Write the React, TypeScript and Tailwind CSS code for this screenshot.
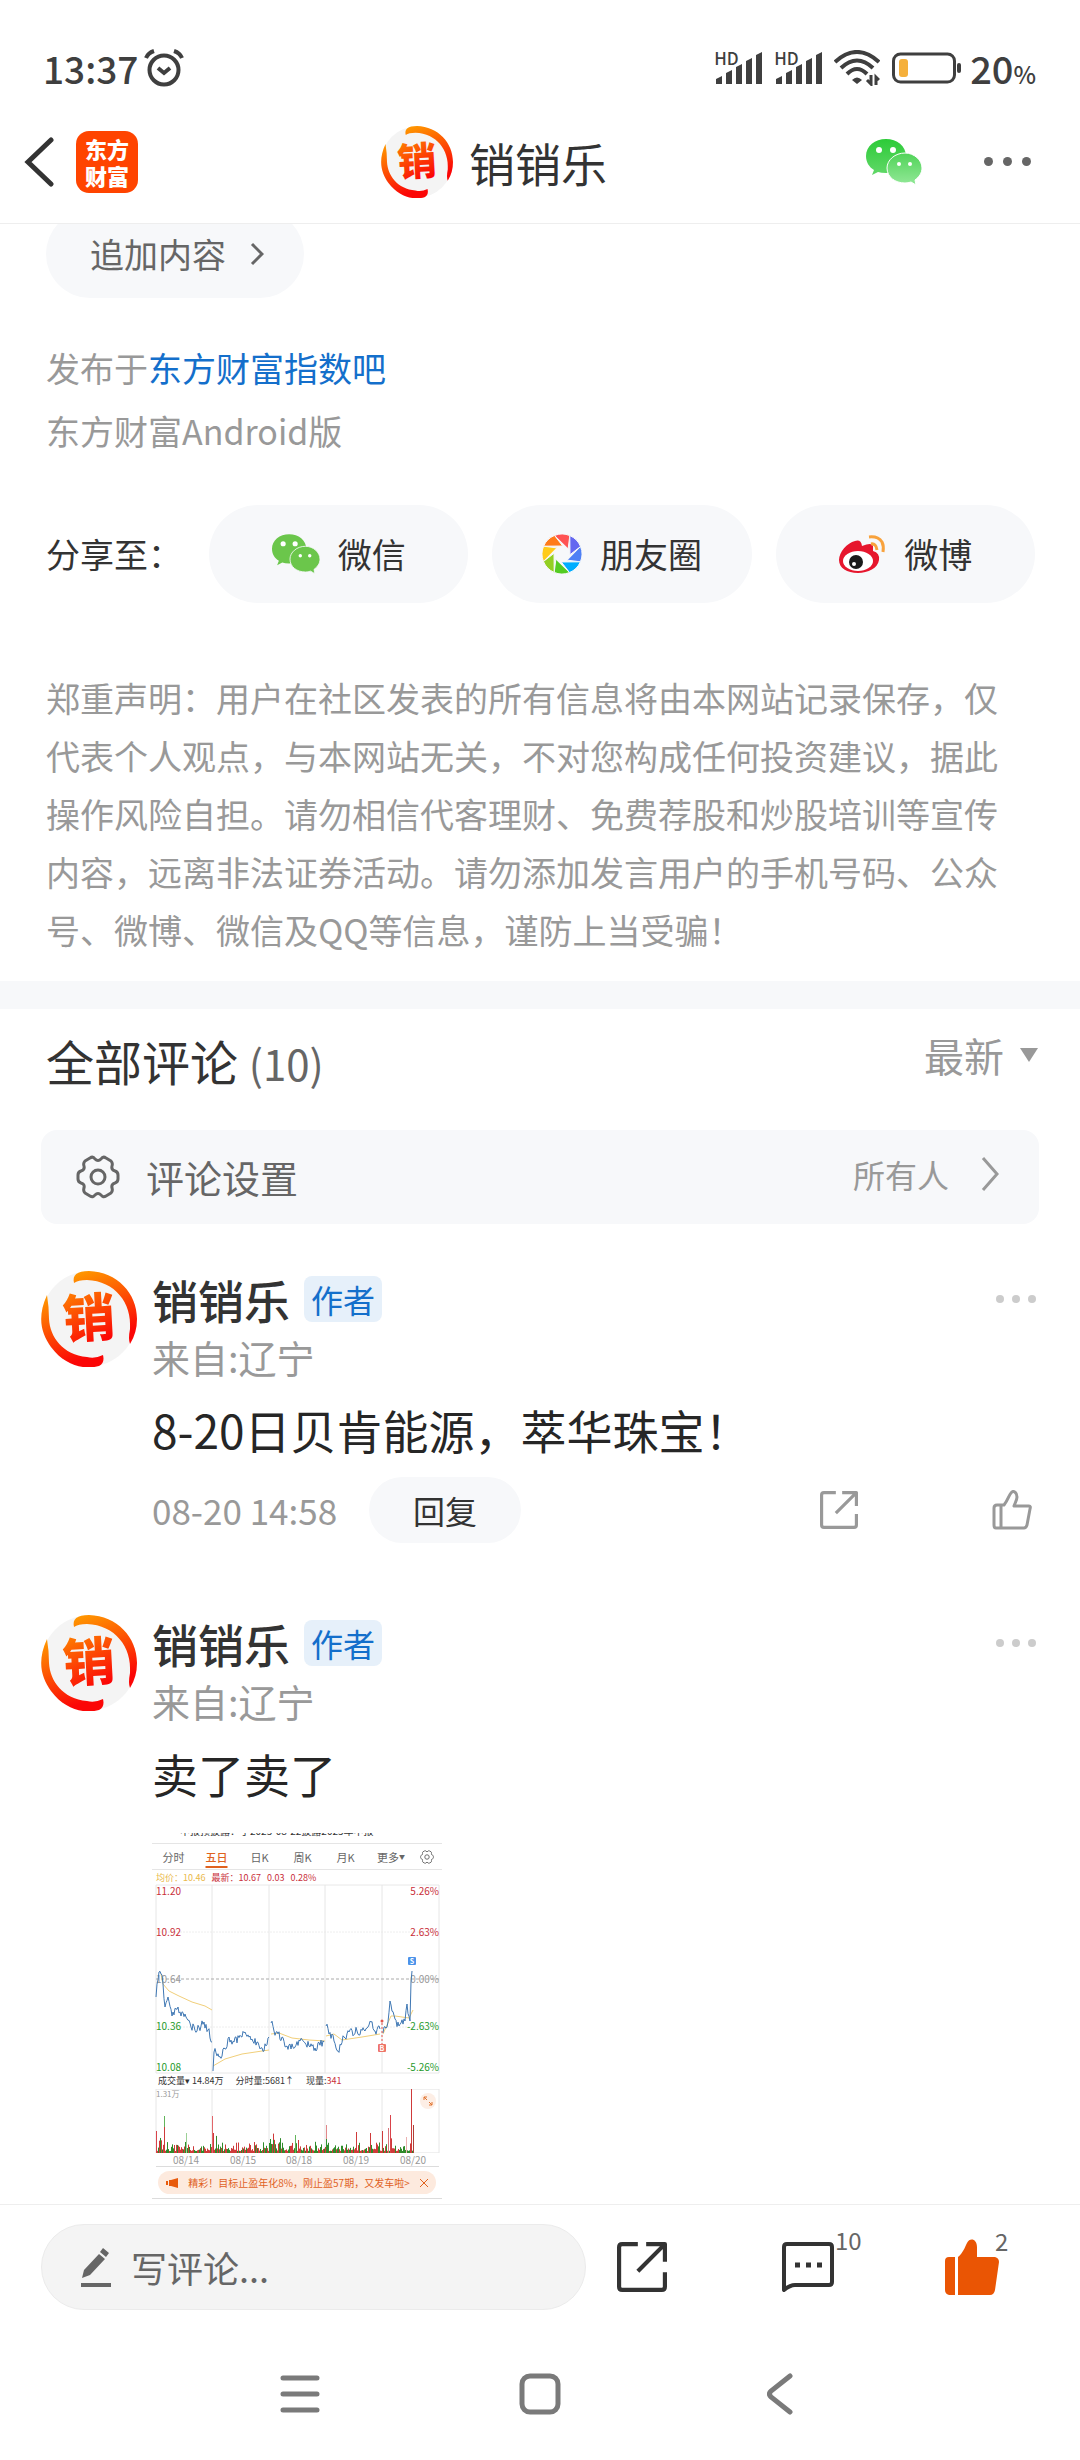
import type { ReactNode } from 'react';

type Point = [number, number];

const bladeColors = ['#ff7b1a', '#ff5353', '#6467f0', '#4f80f5', '#00adff', '#54cc22', '#93cf22', '#ffcb1a'];

const comments = [
  { id: 'c1', text: '8-20日贝肯能源，萃华珠宝！', time: '08-20 14:58', chart: false },
  { id: 'c2', text: '卖了卖了', time: '', chart: true },
];

// Small seeded generator, keeps the chart the same on every render
const seeded = (seed: number) => () => {
  seed = (seed * 16807) % 2147483647;
  return seed / 2147483647;
};

/* ---------- icons ---------- */

const Avatar = ({ id, className }: { id: string; className: string }) => (
  <svg viewBox="0 0 96 96" className={className} role="img" aria-label="销销乐">
    <defs>
      <linearGradient id={id} x1="0" y1="0" x2="0.3" y2="1">
        <stop offset="0" stopColor="#ff9d00" />
        <stop offset="1" stopColor="#fb0606" />
      </linearGradient>
    </defs>
    <circle cx="48" cy="48" r="47.5" fill="#f4f4f4" />
    <path d="M33 12 C31 4 36 0 48 0 C76 1 96 22 96 48 Q96 62 89 73 Q87 68 89 58 C91 32 74 10 46 9 Q37 9 33 12Z" fill={`url(#${id})`} />
    <path d="M6 24 C-4 46 0 62 10 76 C24 95 44 99 58 95 Q64 92 62 84 Q54 88 46 86 C22 84 9 66 8 48 Q8 36 6 24Z" fill={`url(#${id})`} />
    <text x="48" y="66" textAnchor="middle" fontSize="52" fontWeight="900" fill={`url(#${id})`} transform="rotate(-3 48 48)">销</text>
  </svg>
);

const WechatIcon = ({ className, back, front, line }: { className: string; back: string; front: string; line: string }) => (
  <svg viewBox="0 0 56 46" className={className} aria-hidden="true">
    <defs>
      <linearGradient id="wechatBack" x1="0" y1="0" x2="0" y2="1">
        <stop offset="0" stopColor="#2ccb38" />
        <stop offset="1" stopColor="#62d869" />
      </linearGradient>
      <linearGradient id="wechatFront" x1="0" y1="0" x2="0" y2="1">
        <stop offset="0" stopColor="#50d358" />
        <stop offset="1" stopColor="#93e898" />
      </linearGradient>
    </defs>
    <path d="M20 0 C31 0 40 7 40 17 C40 27 31 34 20 34 Q15 34 12 33 L6 36 L8 31 C3 28 0 23 0 17 C0 7 9 0 20 0Z" fill={back} />
    <circle cx="13" cy="11" r="3" fill="#fff" />
    <circle cx="27" cy="11" r="3" fill="#fff" />
    <path d="M39 14 C48 14 56 21 56 29 C56 34 53 38 49 41 L50 46 L45 43 Q42 44 39 44 C29 44 21 38 21 29 C21 21 29 14 39 14Z" fill={front} stroke={line} strokeWidth="1" />
    <circle cx="33" cy="25" r="2" fill="#fff" />
    <circle cx="44" cy="25" r="2" fill="#fff" />
  </svg>
);

const MomentsIcon = () => {
  const at = (deg: number, r: number) =>
    `${(20 + r * Math.cos((deg * Math.PI) / 180)).toFixed(2)} ${(20 + r * Math.sin((deg * Math.PI) / 180)).toFixed(2)}`;
  return (
    <svg viewBox="0 0 40 40" className="size-10" aria-hidden="true">
      {bladeColors.map((color, i) => {
        const a = 203 + i * 45;
        return <path key={color} d={`M${at(a, 20)} A20 20 0 0 1 ${at(a + 45, 20)} L${at(a + 72, 8)}Z`} fill={color} stroke="#f7f8fa" strokeWidth="1" />;
      })}
    </svg>
  );
};

const WeiboIcon = () => (
  <svg viewBox="0 0 48 40" className="h-10 w-12" aria-hidden="true">
    <path d="M1 26 C1 18 9 9 17 7 Q23 5 24 12 Q34 8 35 12 L35 17 Q42 19 41 26 C40 34 30 39 20 39 C9 39 1 34 1 26Z" fill="#e6162d" />
    <ellipse cx="20" cy="27" rx="15" ry="10" fill="#fff" />
    <circle cx="18" cy="28" r="7" fill="#1a1a1a" />
    <circle cx="16" cy="30" r="2" fill="#fff" />
    <path d="M31 3 Q40 2 44 8 Q46 12 45 18" fill="none" stroke="#f8a23c" strokeWidth="3" />
    <path d="M33 10 Q38 9 39 16" fill="none" stroke="#f8a23c" strokeWidth="3" />
  </svg>
);

const ShareIcon = ({ className }: { className: string }) => (
  <svg viewBox="0 0 48 48" fill="none" stroke="currentColor" strokeWidth="4" strokeLinejoin="round" className={className} aria-hidden="true">
    <path d="M20 2 H5 Q2 2 2 5 V43 Q2 46 5 46 H43 Q46 46 46 43 V29" />
    <path d="M28 2 H46 V19 M45 3 L20 28" />
  </svg>
);

const LikeIcon = () => (
  <svg viewBox="0 0 40 40" fill="none" stroke="currentColor" strokeWidth="3" strokeLinejoin="round" className="size-10" aria-hidden="true">
    <path d="M9 15 H12 C16 10 17 5 19 3 C21 0 25 2 25 7 C25 10 23 13 22 16 H37 Q39 16 38 19 L35 35 Q34 38 32 38 H4 Q2 38 2 35 V18 Q2 15 5 15 H9 V38" />
  </svg>
);

const GearIcon = ({ className }: { className: string }) => (
  <svg viewBox="0 0 44 44" fill="none" stroke="currentColor" strokeWidth="3" strokeLinejoin="round" className={className} aria-hidden="true">
    <path d="M14 3 Q17 1 19 4 Q22 7 25 4 Q27 1 30 3 L35 6 Q37 8 36 11 Q35 15 39 16 Q42 17 42 20 V24 Q42 27 39 28 Q35 29 36 33 Q37 36 35 38 L30 41 Q27 43 25 40 Q22 37 19 40 Q17 43 14 41 L9 38 Q7 36 8 33 Q9 29 5 28 Q2 27 2 24 V20 Q2 17 5 16 Q9 15 8 11 Q7 8 9 6Z" />
    <circle cx="22" cy="22" r="7" />
  </svg>
);

const Signal = () => (
  <div className="relative h-8 w-12">
    <span className="absolute left-0 top-0 text-[17px] font-medium leading-3">HD</span>
    <svg viewBox="0 0 48 32" className="size-full" fill="currentColor" aria-hidden="true">
      <path d="M2 27 L8 24 V32 H2Z M12 21 L18 18 V32 H12Z M22 15 L28 12 V32 H22Z M32 9 L38 6 V32 H32Z M42 3 L48 0 V32 H42Z" />
    </svg>
  </div>
);

/* ---------- chart attached to the comment ---------- */

const days: Point[][] = [
  [[4, 112], [7, 87], [9, 89], [11, 99], [13, 122], [16, 112], [20, 131], [26, 122], [29, 131], [33, 129], [39, 142], [45, 146], [52, 137], [56, 145], [60, 157]],
  [[61, 186], [62, 167], [67, 172], [73, 164], [77, 152], [82, 157], [93, 147], [100, 154], [105, 157], [112, 166], [117, 152]],
  [[119, 138], [122, 146], [130, 152], [135, 161], [143, 162], [148, 156], [157, 161], [163, 163], [172, 157]],
  [[174, 141], [177, 149], [182, 156], [186, 166], [192, 152], [197, 147], [205, 146], [213, 146], [219, 137], [223, 146], [228, 144]],
  [[231, 148], [235, 142], [238, 116], [243, 134], [247, 141], [253, 136], [255, 119], [258, 136], [259, 97], [260, 86]],
];

const averages = [
  '9,89 11,99 17,106 27,111 40,117 53,121 60,125',
  '61,181 73,174 90,169 117,165',
  '119,149 127,148 140,153 157,155 173,156',
  '174,151 182,149 190,155 210,152 228,149',
  '231,149 239,131 243,131 257,133 261,125',
];

const rough = (points: Point[], seed: number) => {
  const rand = seeded(seed);
  const out: string[] = [];
  points.forEach(([x, y], i) => {
    out.push(`${x},${y}`);
    const next = points[i + 1];
    if (!next) return;
    for (let s = 1; s < next[0] - x; s++) {
      const t = s / (next[0] - x);
      out.push(`${x + s},${(y + (next[1] - y) * t + (rand() - 0.5) * 9).toFixed(1)}`);
    }
  });
  return out.join(' ');
};

const tabs = ['分时', '五日', '日K', '周K', '月K'];
const gridX = [4, 60, 117, 173, 230, 287];
const dates: [string, number][] = [['08/14', 34], ['08/15', 91], ['08/18', 147], ['08/19', 204], ['08/20', 261]];

const levels: [string, string, number, string][] = [
  ['11.20', '5.26%', 10, '#c9303a'],
  ['10.92', '2.63%', 51, '#c9303a'],
  ['10.64', '0.00%', 98, '#999999'],
  ['10.36', '-2.63%', 145, '#1f9a2c'],
  ['10.08', '-5.26%', 186, '#1f9a2c'],
];

const spikes: [number, number, string][] = [
  [4, 22, '#d9434a'], [12, 37, '#63b55c'], [12, 26, '#cf3a3a'], [34, 20, '#9bd096'], [60, 37, '#e2666a'], [61, 20, '#cf3a3a'],
  [118, 14, '#2f9130'], [121, 13, '#2f9130'], [143, 18, '#63b55c'], [146, 13, '#cf3a3a'], [174, 28, '#e2888a'], [174, 14, '#2f9130'],
  [204, 21, '#cf3a3a'], [218, 20, '#cf3a3a'], [230, 22, '#cf3a3a'], [236, 25, '#d9737a'], [238, 38, '#d9434a'], [254, 16, '#eab0b0'],
  [259, 64, '#cf3a3a'], [261, 28, '#b04038'],
];

const rand = seeded(77);
const volumes = Array.from({ length: 257 }, (_, i) => {
  const x = 4 + i;
  const opening = gridX.some((g) => x >= g && x < g + 12);
  return { x, h: 2 + rand() * rand() * (opening ? 20 : 11), up: rand() > 0.45 };
});

const PriceChart = () => (
  <svg viewBox="0 0 290 188" className="block h-[188px] w-full overflow-visible" role="img" aria-label="五日走势">
    <path d="M4 0 H287 M4 188 H287" stroke="#e8e8e8" />
    <path d="M4 47 H287 M4 142 H287" stroke="#eeeeee" strokeDasharray="2 1" />
    {gridX.map((x) => (
      <path key={x} d={`M${x} 0 V188`} stroke="#e6e6e6" />
    ))}
    <path d="M4 94 H287" stroke="#aaaaaa" strokeDasharray="3 2" />
    {levels.map(([price, percent, y, color]) => (
      <g key={price} fill={color} fontSize="10">
        <text x="4" y={y}>{price}</text>
        <text x="287" y={y} textAnchor="end">{percent}</text>
      </g>
    ))}
    {averages.map((points) => (
      <polyline key={points} points={points} fill="none" stroke="#f1cf7a" />
    ))}
    {days.map((points, i) => (
      <polyline key={i} points={rough(points, 11 + i * 7)} fill="none" stroke="#4078b4" strokeWidth="1" />
    ))}
    <rect x="256" y="72" width="8" height="8" rx="1" fill="#4b93ea" />
    <text x="260" y="79" textAnchor="middle" fontSize="7" fontWeight="700" fill="#fff">S</text>
    <path d="M230 138 V159" stroke="#e2574c" strokeDasharray="2 2" />
    <circle cx="230" cy="136" r="1.5" fill="#e2574c" />
    <rect x="226" y="159" width="8" height="8" rx="1" fill="#ee7468" />
    <text x="230" y="166" textAnchor="middle" fontSize="7" fontWeight="700" fill="#fff">B</text>
  </svg>
);

const VolumeChart = () => (
  <svg viewBox="0 0 290 64" className="block h-16 w-full" role="img" aria-label="成交量">
    <path d="M4 0 H287 M4 64 H287" stroke="#e0e0e0" />
    {gridX.map((x) => (
      <path key={x} d={`M${x} 0 V64`} stroke="#e6e6e6" />
    ))}
    {volumes.map(({ x, h, up }) => (
      <rect key={x} x={x} y={64 - h} width="1" height={h} fill={up ? '#cf3a3a' : '#2f8a2a'} />
    ))}
    {spikes.map(([x, h, color], i) => (
      <rect key={i} x={x} y={64 - h} width="1" height={h} fill={color} />
    ))}
    <text x="4" y="8" fontSize="8" fill="#999">1.31万</text>
    <circle cx="276" cy="12" r="8" fill="#fdeee5" />
    <path d="M275 11 L272 8 M272 11 V8 H275 M277 13 L280 16 M280 13 V16 H277" fill="none" stroke="#e0702a" />
  </svg>
);

const ChartShot = () => (
  <div className="w-[290px] pb-[5px]">
    <div className="flex h-2.5 flex-col overflow-hidden">
      <p className="-mt-2 pl-7 text-[10px] leading-[12px] whitespace-nowrap text-[#333]">中报预披露：于2025-08-22披露2025年中报</p>
    </div>
    <div className="flex h-[27px] items-center border-y border-[#e5e5e5] pr-2 text-center text-[11px] leading-4 text-[#666]">
      {tabs.map((tab) => (
        <span key={tab} className={tab === '五日' ? 'w-[43px] font-medium text-[#e0621e] underline decoration-2 underline-offset-4' : 'w-[43px]'}>
          {tab}
        </span>
      ))}
      <span className="ml-2.5 flex items-center">更多<span className="text-[6px]">▼</span></span>
      <GearIcon className="ml-auto size-3.5" />
    </div>
    <p className="flex h-[15px] items-center gap-1.5 pl-1 text-[9px] leading-3 text-[#c9303a]">
      <span className="text-[#eab949]">均价：10.46</span>
      <span>最新：10.67</span>
      <span>0.03</span>
      <span>0.28%</span>
    </p>
    <PriceChart />
    <p className="flex h-4 items-center gap-3 pl-1.5 text-[9px] leading-3 text-[#333]">
      <span>成交量▾ 14.84万</span>
      <span>分时量:5681↑</span>
      <span>现量:<span className="text-[#c9303a]">341</span></span>
    </p>
    <VolumeChart />
    <svg viewBox="0 0 290 14" className="block h-3.5 w-full overflow-visible" aria-hidden="true">
      {dates.map(([label, x]) => (
        <text key={label} x={x} y="11" textAnchor="middle" fontSize="10" fill="#999">{label}</text>
      ))}
      <path d="M4 13.5 H287" stroke="#dcdcdc" />
    </svg>
    <div className="mx-1.5 my-1 flex h-[23px] items-center justify-between rounded-full bg-[#fdeade] px-2 text-[10px] leading-4 whitespace-nowrap text-[#e0621e]">
      <svg viewBox="0 0 12 10" className="h-2.5 w-3" fill="#e85a0c" aria-hidden="true">
        <path d="M12 0 V10 L5 8 H3 V2 H5Z M0 3 H2 V7 H0Z" />
      </svg>
      <span>精彩！目标止盈年化8%，刚止盈57期，又发车啦&gt;</span>
      <svg viewBox="0 0 8 8" className="size-2" stroke="currentColor" aria-hidden="true">
        <path d="M0 0 L8 8 M8 0 L0 8" />
      </svg>
    </div>
    <div className="h-px bg-[#dcdcdc]" />
  </div>
);

/* ---------- page parts ---------- */

const SharePill = ({ icon, label }: { icon: ReactNode; label: string }) => (
  <button type="button" className="flex h-[98px] flex-1 items-center justify-center gap-[18px] rounded-full bg-[#f7f8fa] text-[34px] leading-[48px] text-[#333]">
    {icon}
    {label}
  </button>
);

const StatusBar = () => (
  <div className="flex h-[100px] items-center justify-between pt-9 pr-11 pl-[43px] text-[#3f3f3f]">
    <div className="flex items-center gap-1.5">
      <span className="text-[37px] font-medium leading-[44px]">13:37</span>
      <svg viewBox="0 0 40 38" className="h-[38px] w-10" fill="none" stroke="currentColor" strokeWidth="4" aria-hidden="true">
        <circle cx="20" cy="21" r="14.5" />
        <path d="M2 9 Q4 4 10 2 M38 9 Q36 4 30 2 M14 19 L20 24 L26 19" />
      </svg>
    </div>
    <div className="flex items-center gap-3">
      <Signal />
      <Signal />
      <svg viewBox="0 0 46 36" className="h-9 w-[46px]" fill="none" stroke="currentColor" strokeWidth="4" aria-hidden="true">
        <path d="M1 12 Q23 -8 45 12 M7 18 Q23 3 39 18 M13 24 Q23 14 33 24" />
        <path d="M18 30 Q23 25 28 30 L23 34Z" fill="currentColor" stroke="none" />
        <path d="M37 25 V34 L33 30 M42 35 V27 L45 30" strokeWidth="3" />
      </svg>
      <svg viewBox="0 0 70 32" className="h-8 w-[70px]" aria-hidden="true">
        <rect x="1.5" y="2" width="61" height="28" rx="7" fill="none" stroke="currentColor" strokeWidth="3" />
        <rect x="7" y="7" width="9" height="18" rx="3" fill="#f5b03c" />
        <rect x="65" y="11" width="4" height="10" rx="2" fill="currentColor" />
      </svg>
      <p className="-ml-1 flex items-baseline text-[38px] font-medium leading-[44px]">
        20<span className="text-[24px] leading-[28px]">%</span>
      </p>
    </div>
  </div>
);

const Header = () => (
  <header className="flex h-[123px] items-center px-6">
    <div className="flex w-[357px] items-center gap-[22px]">
      <button type="button" aria-label="返回">
        <svg viewBox="0 0 30 50" className="h-[50px] w-[30px]" fill="none" stroke="#333" strokeWidth="5" strokeLinecap="round" aria-hidden="true">
          <path d="M27 3 L4 25 L27 47" />
        </svg>
      </button>
      <a href="#home" className="flex size-[62px] items-center justify-center rounded-[13px] bg-[#ff4400] text-[22px] font-black leading-[27px] text-white">
        <span>东方<br />财富</span>
      </a>
    </div>
    <h1 className="flex items-center gap-4 text-[46px] leading-[64px] text-[#333]">
      <Avatar id="avatarHead" className="size-[72px]" />
      销销乐
    </h1>
    <div className="flex flex-1 items-center justify-end gap-[62px] pr-[25px]">
      <button type="button" aria-label="微信">
        <WechatIcon className="h-[46px] w-14" back="url(#wechatBack)" front="url(#wechatFront)" line="#fff" />
      </button>
      <button type="button" aria-label="更多" className="flex gap-2.5">
        <span className="size-[9px] rounded-full bg-[#666]" />
        <span className="size-[9px] rounded-full bg-[#666]" />
        <span className="size-[9px] rounded-full bg-[#666]" />
      </button>
    </div>
  </header>
);

const Comment = ({ comment }: { comment: (typeof comments)[number] }) => (
  <article className="flex gap-[15px] pr-11 pl-[41px]">
    <Avatar id={`avatar-${comment.id}`} className="mt-0.5 size-24 shrink-0" />
    <div className="flex-1">
      <div className="flex h-[60px] items-center">
        <h3 className="text-[46px] font-medium leading-[60px] text-[#333]">销销乐</h3>
        <span className="ml-[14px] flex h-[46px] items-center rounded-lg bg-[#e6f0fa] px-[7px] text-[32px] leading-[46px] text-[#146fcb]">作者</span>
        <button type="button" aria-label="更多" className="ml-auto flex gap-2">
          <span className="size-2 rounded-full bg-[#ccc]" />
          <span className="size-2 rounded-full bg-[#ccc]" />
          <span className="size-2 rounded-full bg-[#ccc]" />
        </button>
      </div>
      <p className="text-[38px] leading-[56px] text-[#999]">来自:辽宁</p>
      <p className="mt-3 text-[46px] leading-[64px] text-[#262626]">{comment.text}</p>
      {comment.chart ? (
        <div className="mt-7">
          <ChartShot />
        </div>
      ) : (
        <div className="mt-4 flex items-center pr-1 text-[#999]">
          <time className="w-[217px] text-[35px] leading-[48px]">{comment.time}</time>
          <button type="button" className="h-[66px] w-[152px] rounded-full bg-[#f7f8fa] text-[32px] leading-[48px] text-[#333]">回复</button>
          <button type="button" aria-label="分享" className="mr-[134px] ml-auto">
            <ShareIcon className="size-[38px]" />
          </button>
          <button type="button" aria-label="点赞">
            <LikeIcon />
          </button>
        </div>
      )}
    </div>
  </article>
);

const BottomBar = () => (
  <footer className="border-t border-[#eee] bg-white">
    <div className="flex h-[124px] items-center pl-[41px]">
      <div className="flex h-[86px] w-[545px] items-center gap-5 rounded-full border border-[#ebebeb] bg-[#f4f4f4] pl-[39px]">
        <svg viewBox="0 0 30 40" className="h-10 w-[30px] shrink-0" fill="#666" aria-hidden="true">
          <path d="M22 1 L28 6 L25 10 L19 5Z M18 7 L24 12 L9 28 L1 31 L3 23Z M0 36 H30 V40 H0Z" />
        </svg>
        <input type="text" aria-label="写评论" placeholder="写评论..." className="h-[52px] min-w-0 flex-1 bg-transparent text-[36px] leading-[52px] outline-none placeholder:text-[#666]" />
      </div>
      <div className="flex flex-1 items-center justify-between pr-[81px] pl-[31px] text-[#333]">
        <button type="button" aria-label="分享">
          <ShareIcon className="size-[50px]" />
        </button>
        <button type="button" className="relative ml-1">
          <svg viewBox="0 0 54 50" className="h-[50px] w-[54px]" fill="none" stroke="currentColor" strokeWidth="4" strokeLinejoin="round" aria-hidden="true">
            <path d="M6 2 H48 Q51 2 51 5 V40 Q51 43 48 43 H14 Q9 43 3 48 V5 Q3 2 6 2Z" />
            <path d="M14 23 H19 M25 23 H30 M36 23 H41" strokeWidth="5" />
          </svg>
          <span className="absolute -top-4 left-[54px] text-[24px] leading-7 text-[#666]">10</span>
        </button>
        <button type="button" className="relative">
          <svg viewBox="0 0 54 56" className="h-14 w-[54px]" fill="#ea5504" aria-hidden="true">
            <path d="M4 18 H10 V56 H4 Q0 55 0 51 V22 Q0 18 4 18Z M13 56 V18 C18 14 20 8 22 4 C25 -2 32 0 32 8 L32 18 H50 Q54 19 54 23 L50 51 Q49 56 45 56Z" />
          </svg>
          <span className="absolute -top-3 left-[50px] text-[24px] leading-7 text-[#666]">2</span>
        </button>
      </div>
    </div>
    <nav className="flex h-[130px] items-center justify-between px-[278px] text-[#7a7a7a]">
      <button type="button" aria-label="最近任务" className="flex w-11 justify-center">
        <svg viewBox="0 0 40 40" className="size-10" stroke="currentColor" strokeWidth="5" strokeLinecap="round" aria-hidden="true">
          <path d="M3 4 H37 M3 20 H37 M3 36 H37" />
        </svg>
      </button>
      <button type="button" aria-label="主屏幕" className="flex w-11 justify-center">
        <svg viewBox="0 0 42 42" className="size-[42px]" fill="none" stroke="currentColor" strokeWidth="5" aria-hidden="true">
          <rect x="3" y="3" width="36" height="36" rx="8" />
        </svg>
      </button>
      <button type="button" aria-label="返回" className="flex w-11 justify-center">
        <svg viewBox="0 0 26 42" className="h-[42px] w-[26px]" fill="none" stroke="currentColor" strokeWidth="5" strokeLinecap="round" aria-hidden="true">
          <path d="M23 3 L4 18 Q1 21 4 24 L23 39" />
        </svg>
      </button>
    </nav>
  </footer>
);

const App = () => {
  return (
    <div className="min-h-screen bg-white font-['Noto_Sans_CJK_SC',sans-serif]">
      <StatusBar />
      <Header />

      <main className="overflow-hidden border-t border-[#eee]">
        {/* Post footer */}
        <section className="px-[46px]">
          <button type="button" className="-mt-[14px] flex h-[88px] items-center gap-6 rounded-full bg-[#f7f8fa] pr-10 pl-11 text-[34px] leading-[48px] text-[#666]">
            追加内容
            <svg viewBox="0 0 14 24" className="h-6 w-3.5" fill="none" stroke="currentColor" strokeWidth="3" aria-hidden="true">
              <path d="M2 2 L12 12 L2 22" />
            </svg>
          </button>
          <div className="mt-[38px] text-[34px] leading-[63px] text-[#999]">
            <p>发布于<a href="#bar" className="text-[#146fcb]">东方财富指数吧</a></p>
            <p>东方财富Android版</p>
          </div>
          <div className="mt-[43px] -mr-px flex items-center gap-6">
            <span className="w-[139px] text-[34px] leading-[48px] whitespace-nowrap text-[#333]">分享至：</span>
            <SharePill label="微信" icon={<WechatIcon className="h-10 w-12" back="#6bc64b" front="#6bc64b" line="#f7f8fa" />} />
            <SharePill label="朋友圈" icon={<MomentsIcon />} />
            <SharePill label="微博" icon={<WeiboIcon />} />
          </div>
          <p className="mt-[66px] pr-6 text-[34px] leading-[58px] text-[#999]">
            郑重声明：用户在社区发表的所有信息将由本网站记录保存，仅代表个人观点，与本网站无关，不对您构成任何投资建议，据此操作风险自担。请勿相信代客理财、免费荐股和炒股培训等宣传内容，远离非法证券活动。请勿添加发言用户的手机号码、公众号、微博、微信及QQ等信息，谨防上当受骗！
          </p>
        </section>

        <div className="mt-[22px] h-7 bg-[#f7f8fa]" />

        {/* Comments */}
        <section>
          <div className="flex items-start justify-between pt-[18px] pr-[42px] pl-[46px]">
            <h2 className="text-[48px] leading-[66px] text-[#333]">
              全部评论 <span className="text-[42px] text-[#666]">(10)</span>
            </h2>
            <button type="button" className="flex items-center gap-4 text-[40px] leading-[56px] text-[#999]">
              最新
              <svg viewBox="0 0 18 14" className="h-3.5 w-[18px]" fill="currentColor" aria-hidden="true">
                <path d="M0 0 H18 L9 14Z" />
              </svg>
            </button>
          </div>
          <div className="px-[41px] pt-[34px]">
            <button type="button" className="flex h-[94px] w-full items-center rounded-2xl bg-[#f7f8fa] pr-10 pl-[35px] text-[#666]">
              <GearIcon className="size-[44px]" />
              <span className="ml-[26px] text-[38px] leading-[56px]">评论设置</span>
              <span className="ml-auto flex items-center gap-8 pb-1.5 text-[32px] leading-[48px] text-[#999]">
                所有人
                <svg viewBox="0 0 18 34" className="h-[34px] w-[18px]" fill="none" stroke="#999" strokeWidth="3" aria-hidden="true">
                  <path d="M2 1 L16 17 L2 33" />
                </svg>
              </span>
            </button>
          </div>
          <div className="flex flex-col gap-[70px] pt-[45px]">
            {comments.map((comment) => (
              <Comment key={comment.id} comment={comment} />
            ))}
          </div>
        </section>
      </main>

      <BottomBar />
    </div>
  );
};

export default App;
